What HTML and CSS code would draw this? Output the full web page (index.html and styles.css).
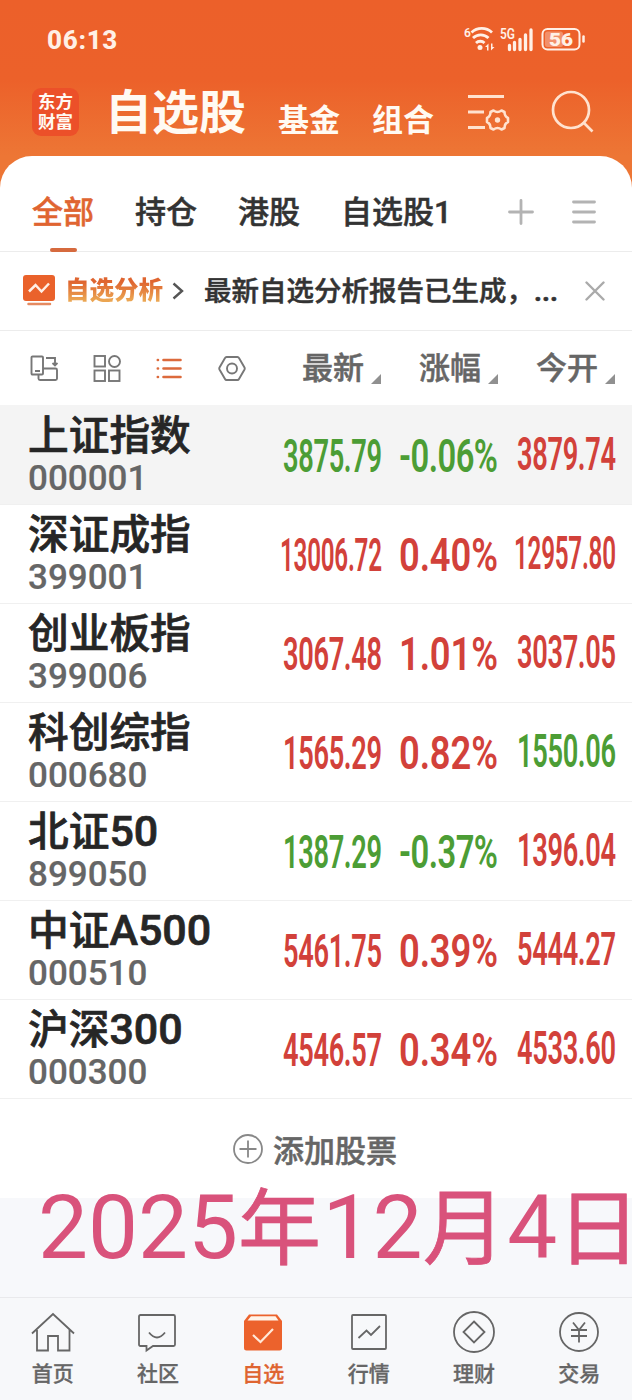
FILE: index.html
```html
<!DOCTYPE html>
<html lang="zh-CN">
<head>
    <meta charset="UTF-8">
    <meta name="viewport" content="width=device-width, initial-scale=1.0">
    <title>自选股</title>
    <link rel="stylesheet" href="styles.css">
</head>
<body>
    <header class="header">
        <div class="status">
            <span class="status__time">06:13</span>
            <svg class="status__icons" width="124" height="28" viewBox="0 0 124 28">
                <text class="status__small" x="0" y="12" font-size="12">6</text>
                <g fill="none" stroke="#fff0e6" stroke-width="2.800">
                    <path d="M7.500 7.500a15 15 0 0 1 20.500 0"/>
                    <path d="M9 13a11 11 0 0 1 15.500 0"/>
                    <path d="M12 18a6 6 0 0 1 8.500 0"/>
                </g>
                <circle cx="16" cy="22.500" r="2.500" fill="#fff0e6"/>
                <path d="M21 22l3.500-3.500v7H23V22zM30.500 22L27 25.500v-7h1.500V22z" fill="#fff0e6"/>
                <text class="status__small" x="36" y="14" font-size="15" textLength="15" lengthAdjust="spacingAndGlyphs">5G</text>
                <path d="M45.500 20.500v4M50.500 17.500v7M56 14.500v10M61.500 10v14.500M67 5v19.500" stroke="#fff0e6" stroke-width="3.300" stroke-linecap="round"/>
                <rect x="78.500" y="4" width="37" height="20.500" rx="5" fill="none" stroke="#fff0e6" stroke-width="2"/>
                <rect x="81" y="6.500" width="18" height="15.500" rx="2.500" fill="#fff" opacity=".3"/>
                <path d="M119.500 11.500v5" stroke="#fff0e6" stroke-width="2.500" stroke-linecap="round"/>
                <text class="status__battery" x="85" y="21" textLength="24" lengthAdjust="spacingAndGlyphs">56</text>
            </svg>
        </div>
        <div class="title">
            <div class="logo">东方<br>财富</div>
            <h1>自选股</h1>
            <span class="title__sub">基金</span>
            <span class="title__sub">组合</span>
            <svg class="title__manage" width="44" height="42" viewBox="0 0 44 42" fill="none" stroke="#ffe2cf" stroke-width="3">
                <path d="M1 4.500h36M1 20h16M1 35.500h17"/>
                <path d="M26.500 18.500Q30.500 21.500 34.500 18.500L37.500 20Q37.500 24.500 41 26V30Q37.500 31.500 37.500 36L34.500 37.500Q30.500 34.500 26.500 37.500L23.500 36Q23.500 31.500 20 30V26Q23.500 24.500 23.500 20Z" stroke-width="2.600" stroke-linejoin="round"/>
                <circle cx="30.500" cy="28" r="2.700" fill="#ffe2cf" stroke="none"/>
            </svg>
            <svg class="title__search" width="44" height="44" viewBox="0 0 44 44" fill="none" stroke="#ffe2cf" stroke-width="2.700">
                <circle cx="20" cy="20" r="18"/>
                <path d="M32 32l9.500 9.500"/>
            </svg>
        </div>
    </header>
    <main class="card">
        <nav class="tabs">
            <span class="tabs__item tabs__item--active">全部</span>
            <span class="tabs__item">持仓</span>
            <span class="tabs__item">港股</span>
            <span class="tabs__item">自选股1</span>
            <svg class="tabs__add" width="26" height="26" viewBox="0 0 26 26"><path d="M13 1.500v23M1.500 13h23" stroke="#b3b3b3" stroke-width="2.800" stroke-linecap="round"/></svg>
            <svg class="tabs__menu" width="24" height="26" viewBox="0 0 24 26"><path d="M1.500 3h21M1.500 13h21M1.500 23h21" stroke="#b3b3b3" stroke-width="2.800" stroke-linecap="round"/></svg>
        </nav>
        <section class="notice">
            <svg width="32" height="32" viewBox="0 0 32 32">
                <rect width="32" height="26" rx="3" fill="#ea622b"/>
                <path d="M6 16.500l6.500-6.500 6 6.500L26 8.500" fill="none" stroke="#fff0e6" stroke-width="2.500"/>
                <path d="M5.500 29h21.500" stroke="#e58a61" stroke-width="2.500" stroke-linecap="round"/>
            </svg>
            <span class="notice__title">自选分析</span>
            <svg class="notice__arrow" width="12" height="18" viewBox="0 0 12 18"><path d="M1.500 1.500l8.500 7.500-8.500 7.500" fill="none" stroke="#555" stroke-width="2.400"/></svg>
            <span class="notice__text">最新自选分析报告已生成，<b>...</b></span>
            <svg class="notice__close" width="20" height="20" viewBox="0 0 20 20"><path d="M1.500 1.500l17 17M18.500 1.500l-17 17" stroke="#aaa" stroke-width="2.400" stroke-linecap="round"/></svg>
        </section>
        <section class="tools">
            <div class="tools__icons">
                <svg width="28" height="28" viewBox="0 0 28 28" fill="none" stroke="#777" stroke-width="1.900">
                    <rect x="1.500" y="1.500" width="11.500" height="18" rx="1"/>
                    <path d="M5 16h5M16 3h9v7M22.500 8l2.500 2.500L27.500 8M8.500 20v3.500q0 1.500 1.500 1.500h15.500q1.500 0 1.500-1.500V15q0-1.500-1.500-1.500H13"/>
                </svg>
                <svg width="28" height="28" viewBox="0 0 28 28" fill="none" stroke="#777" stroke-width="1.900">
                    <rect x="1.500" y="1" width="10.500" height="10.500"/>
                    <circle cx="21.500" cy="6.500" r="5.500"/>
                    <rect x="1.500" y="15.500" width="10.500" height="10.500"/>
                    <rect x="16" y="15.500" width="10.500" height="10.500"/>
                </svg>
                <svg width="28" height="28" viewBox="0 0 28 28" fill="none" stroke="#dc6a3c" stroke-width="2.600" stroke-linecap="round">
                    <path d="M2.800 5h.2M2.800 13.500h.2M2.800 22h.2M8.500 5h17M8.500 13.500h17M8.500 22h17"/>
                </svg>
                <svg width="28" height="28" viewBox="0 0 28 28" fill="none" stroke="#777" stroke-width="1.900">
                    <path d="M8.500 2h11q1 0 1.500 1l5.500 9.500q.5 1 0 2L21 24q-.5 1-1.500 1h-11q-1 0-1.500-1L1.500 14.500q-.5-1 0-2L7 3q.5-1 1.500-1z"/>
                    <circle cx="14" cy="13.500" r="5"/>
                </svg>
            </div>
            <div class="tools__sort">最新</div>
            <div class="tools__sort">涨幅</div>
            <div class="tools__sort">今开</div>
        </section>
        <section class="stocks">
            <div class="stock stock--top">
                <div class="stock__name">上证指数<small>000001</small></div>
                <svg class="num down" viewBox="0 0 171 60" preserveAspectRatio="none"><text y="48" textLength="171">3875.79</text></svg>
                <svg class="num down" viewBox="0 0 142 60" preserveAspectRatio="none"><text y="48" textLength="142">-0.06%</text></svg>
                <svg class="num num--open up" viewBox="0 0 171 60" preserveAspectRatio="none"><text y="48" textLength="171">3879.74</text></svg>
            </div>
            <div class="stock">
                <div class="stock__name">深证成指<small>399001</small></div>
                <svg class="num num--long up" viewBox="0 0 198 60" preserveAspectRatio="none"><text y="48" textLength="198">13006.72</text></svg>
                <svg class="num up" viewBox="0 0 128 60" preserveAspectRatio="none"><text y="48" textLength="128">0.40%</text></svg>
                <svg class="num num--long num--open up" viewBox="0 0 198 60" preserveAspectRatio="none"><text y="48" textLength="198">12957.80</text></svg>
            </div>
            <div class="stock">
                <div class="stock__name">创业板指<small>399006</small></div>
                <svg class="num up" viewBox="0 0 171 60" preserveAspectRatio="none"><text y="48" textLength="171">3067.48</text></svg>
                <svg class="num up" viewBox="0 0 128 60" preserveAspectRatio="none"><text y="48" textLength="128">1.01%</text></svg>
                <svg class="num num--open up" viewBox="0 0 171 60" preserveAspectRatio="none"><text y="48" textLength="171">3037.05</text></svg>
            </div>
            <div class="stock">
                <div class="stock__name">科创综指<small>000680</small></div>
                <svg class="num up" viewBox="0 0 171 60" preserveAspectRatio="none"><text y="48" textLength="171">1565.29</text></svg>
                <svg class="num up" viewBox="0 0 128 60" preserveAspectRatio="none"><text y="48" textLength="128">0.82%</text></svg>
                <svg class="num num--open down" viewBox="0 0 171 60" preserveAspectRatio="none"><text y="48" textLength="171">1550.06</text></svg>
            </div>
            <div class="stock">
                <div class="stock__name">北证<b>50</b><small>899050</small></div>
                <svg class="num down" viewBox="0 0 171 60" preserveAspectRatio="none"><text y="48" textLength="171">1387.29</text></svg>
                <svg class="num down" viewBox="0 0 142 60" preserveAspectRatio="none"><text y="48" textLength="142">-0.37%</text></svg>
                <svg class="num num--open up" viewBox="0 0 171 60" preserveAspectRatio="none"><text y="48" textLength="171">1396.04</text></svg>
            </div>
            <div class="stock">
                <div class="stock__name">中证<b>A500</b><small>000510</small></div>
                <svg class="num up" viewBox="0 0 171 60" preserveAspectRatio="none"><text y="48" textLength="171">5461.75</text></svg>
                <svg class="num up" viewBox="0 0 128 60" preserveAspectRatio="none"><text y="48" textLength="128">0.39%</text></svg>
                <svg class="num num--open up" viewBox="0 0 171 60" preserveAspectRatio="none"><text y="48" textLength="171">5444.27</text></svg>
            </div>
            <div class="stock">
                <div class="stock__name">沪深<b>300</b><small>000300</small></div>
                <svg class="num up" viewBox="0 0 171 60" preserveAspectRatio="none"><text y="48" textLength="171">4546.57</text></svg>
                <svg class="num up" viewBox="0 0 128 60" preserveAspectRatio="none"><text y="48" textLength="128">0.34%</text></svg>
                <svg class="num num--open up" viewBox="0 0 171 60" preserveAspectRatio="none"><text y="48" textLength="171">4533.60</text></svg>
            </div>
        </section>
        <div class="add">
            <svg width="30" height="30" viewBox="0 0 30 30" fill="none" stroke="#888" stroke-width="1.800">
                <circle cx="15" cy="15" r="14"/>
                <path d="M15 6.500v17M6.500 15h17"/>
            </svg>
            <span>添加股票</span>
        </div>
    </main>
    <div class="date">2025<i>年</i>12<i>月</i>4<i>日</i></div>
    <nav class="bottom">
        <div class="bottom__item">
            <svg width="44" height="44" viewBox="0 0 44 44"><path d="M1 22.500L22 3l21 19.500M6 19v20.500h11V25h10v14.500h11.500V19"/></svg>
            首页
        </div>
        <div class="bottom__item">
            <svg width="44" height="44" viewBox="0 0 44 44"><path d="M4.500 4h33q1.500 0 1.500 1.500v28q0 1.500-1.500 1.500H17l-6.500 4.500V35h-6Q3 35 3 33.500v-28Q3 4 4.500 4zM13 21.500q8 10 16 0"/></svg>
            社区
        </div>
        <div class="bottom__item bottom__item--active">
            <svg width="44" height="44" viewBox="0 0 44 44"><path d="M8 3.500h28l5 6.500v27q0 2.500-2.500 2.500h-33Q3 39.500 3 37V10z" fill="#ec622c" stroke="none"/><path d="M10 5.200h24.500l3 4.300H6.500z" fill="#fff4e9" stroke="none"/><path d="M12 24l7.500 7L32 18" stroke="#ffe8d8" stroke-width="2.200"/></svg>
            自选
        </div>
        <div class="bottom__item">
            <svg width="44" height="44" viewBox="0 0 44 44"><rect x="5" y="4" width="34" height="34" rx="1"/><path d="M11.500 27l8-7.500 4.500 4.500 9-9"/></svg>
            行情
        </div>
        <div class="bottom__item">
            <svg width="44" height="44" viewBox="0 0 44 44"><circle cx="22" cy="21" r="20"/><path d="M22 10.500L32.500 21 22 31.500 11.500 21z"/></svg>
            理财
        </div>
        <div class="bottom__item">
            <svg width="44" height="44" viewBox="0 0 44 44"><circle cx="22" cy="21" r="19"/><path d="M16 11.500l6 7.500 6-7.500M14 19h16M14 25h16M22 19v12.500"/></svg>
            交易
        </div>
    </nav>
</body>
</html>
```

FILE: styles.css
```css
* {
    box-sizing: border-box;
}
body {
    position: relative;
    display: flex;
    flex-direction: column;
    width: 632px;
    height: 1400px;
    margin: 0;
    overflow: hidden;
    background-color: #f7f8fb;
    font-family: Roboto, "Noto Sans CJK SC", sans-serif;
    font-weight: 500;
    color: #333;
}
svg {
    display: block;
    flex: none;
}

/* header */
.header {
    height: 196px;
    margin-bottom: -40px;
    background: linear-gradient(#ec602a 0, #ec612a 80px, #ed7635 156px);
    color: #fffaf3;
}
.status {
    display: flex;
    justify-content: space-between;
    height: 80px;
    padding: 25px 44px 0 47px;
}
.status__time {
    font-size: 26px;
    font-weight: 800;
    line-height: 30px;
    letter-spacing: 0.7px;
    color: #fff0e6;
}
.status__small {
    fill: #fff0e6;
    font-weight: 600;
}
.status__battery {
    fill: #fff0e6;
    font-size: 19px;
    font-weight: 900;
}
.title {
    display: flex;
    height: 76px;
    padding-left: 32px;
}
.logo {
    width: 47px;
    height: 48px;
    margin-top: 8px;
    padding-top: 4px;
    border-radius: 9px;
    background-color: #ec5029;
    font-size: 17.5px;
    font-weight: 700;
    line-height: 20px;
    text-align: center;
}
.title h1 {
    margin: 0 0 0 26px;
    font-size: 47px;
    font-weight: 700;
    line-height: 65px;
}
.title__sub {
    margin-left: 32px;
    font-size: 31px;
    font-weight: 700;
    line-height: 81px;
}
.title__manage {
    margin: 12px 0 0 33px;
}
.title__search {
    margin: 10px 0 0 40px;
}

/* tabs */
.card {
    border-radius: 32px 32px 0 0;
    background-color: #fff;
}
.tabs {
    display: flex;
    align-items: center;
    height: 96px;
    padding: 16px 0 0 32px;
    border-bottom: 1px solid #ececec;
    font-size: 31px;
    -webkit-text-stroke: 0.5px;
}
.tabs__item {
    position: relative;
    margin-right: 41px;
    padding-top: 2px;
    line-height: 46px;
}
.tabs__item--active {
    color: #e06431;
}
.tabs__item--active::after {
    content: "";
    position: absolute;
    left: 18px;
    bottom: -16px;
    width: 27px;
    height: 4px;
    border-radius: 2px;
    background-color: #d66a3e;
}
.tabs__add {
    margin: 0 38px 0 15px;
}

/* notice */
.notice {
    display: flex;
    align-items: center;
    height: 79px;
    padding-left: 23px;
    border-bottom: 1px solid #ececec;
}
.notice__title {
    margin-left: 10px;
    background: linear-gradient(#df6530 25%, #eba552 75%);
    -webkit-background-clip: text;
    background-clip: text;
    color: transparent;
    font-size: 24.5px;
    font-weight: 800;
    line-height: 36px;
}
.notice__arrow {
    margin-left: 9px;
}
.notice__text {
    width: 352px;
    margin-left: 20px;
    padding-top: 2px;
    font-size: 27.5px;
    line-height: 40px;
    white-space: nowrap;
    -webkit-text-stroke: 0.5px;
}
.notice__close {
    margin-left: 29px;
}

/* tools */
.tools {
    display: flex;
    height: 74px;
    padding-left: 30px;
    color: #666;
}
.tools__icons {
    display: flex;
    flex: none;
    gap: 34.5px;
    width: 272px;
    padding-top: 24px;
}
.tools__sort {
    display: flex;
    flex: none;
    width: 117px;
    font-size: 31px;
    line-height: 76px;
    -webkit-text-stroke: 0.5px;
}
.tools__sort::after {
    content: "";
    width: 0;
    height: 0;
    margin: 43px 0 0 7px;
    border-bottom: 10px solid #909090;
    border-left: 10px solid transparent;
}

/* stocks */
.stock {
    display: grid;
    grid-template-columns: 252px 102px 116px 118px;
    height: 99px;
    padding-left: 28px;
    border-top: 1px solid #f0f0f0;
}
.stock--top {
    border-color: #f4f4f4;
    background-color: #f4f4f4;
}
.stock__name {
    font-size: 40.7px;
    line-height: 60px;
    color: #262626;
    -webkit-text-stroke: 0.7px;
}
.stock__name b {
    font-size: 43px;
    font-weight: 500;
    line-height: 1;
}
.stock__name small {
    display: block;
    margin-top: -7px;
    font-size: 35px;
    line-height: 40px;
    color: #666;
    -webkit-text-stroke: 0.2px;
}
/* squeezed sideways to the column width */
.num {
    justify-self: end;
    width: 99px;
    height: 60px;
    margin-top: 18px;
    font-size: 47px;
    font-weight: 600;
}
.num--long {
    width: 102px;
}
.num--open {
    margin-top: 16px;
}
.up {
    fill: #d2413a;
}
.down {
    fill: #4c9d35;
}

.add {
    display: flex;
    align-items: center;
    justify-content: center;
    gap: 10px;
    height: 100px;
    padding-right: 2px;
    border-top: 1px solid #f0f0f0;
    color: #666;
    font-size: 31px;
    -webkit-text-stroke: 0.5px;
}

/* date caption, runs over the lower edge of the list */
.date {
    position: absolute;
    top: 1175px;
    left: 38px;
    color: #d9527b;
    font-size: 89px;
    font-weight: 400;
    line-height: 106px;
    white-space: nowrap;
}
.date i {
    font-size: 83px;
    font-style: normal;
    letter-spacing: 1.5px;
    -webkit-text-stroke: 0.8px;
}

/* bottom bar */
.bottom {
    display: flex;
    height: 103px;
    margin-top: auto;
    padding-top: 13px;
    border-top: 1px solid #e9e9ec;
    background-color: #f7f8fa;
}
.bottom__item {
    display: flex;
    flex: 1;
    flex-direction: column;
    align-items: center;
    color: #666;
    font-size: 21px;
    line-height: 39px;
    -webkit-text-stroke: 0.3px;
}
.bottom__item svg {
    fill: none;
    stroke: #666;
    stroke-width: 1.8;
}
.bottom__item--active {
    color: #df6430;
}
```
